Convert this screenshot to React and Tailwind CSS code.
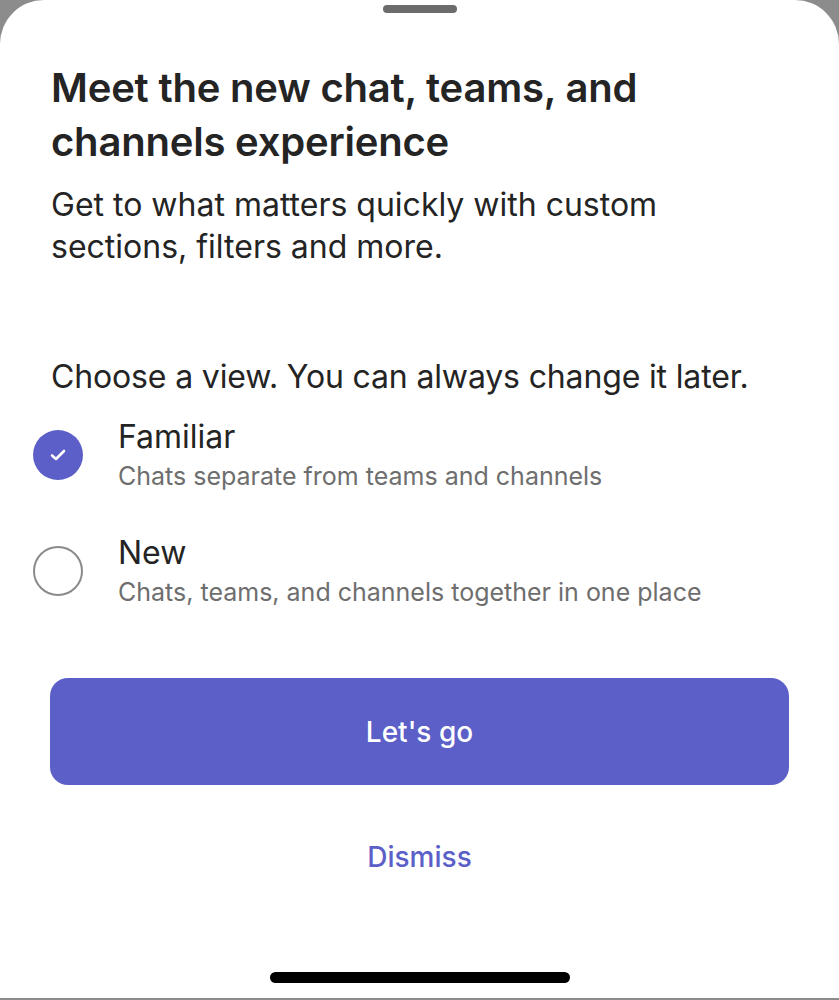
export default function App() {
  const font = { fontFamily: 'Inter, "Noto Sans", sans-serif' };
  return (
    <div className="w-[839px] h-[1000px] bg-[#8c8c8c] overflow-hidden" style={font}>
      <div className="relative w-full h-[998px] bg-white rounded-t-[44px] flex flex-col">
        <div className="flex justify-center pt-[5px]">
          <div className="w-[74px] h-[8px] rounded-full bg-[#6b6b6b]" />
        </div>
        <div className="px-[51px] mt-[48px]">
          <h1 className="text-[40px] leading-[54px] font-semibold text-[#242424] tracking-[-0.2px]">
            Meet the new chat, teams, and<br />channels experience
          </h1>
          <p className="mt-[15px] text-[32px] leading-[42px] text-[#242424]">
            Get to what matters quickly with custom<br />sections, filters and more.
          </p>
          <p className="mt-[88px] text-[32px] leading-[42px] text-[#242424] tracking-[-0.15px]">
            Choose a view. You can always change it later.
          </p>
        </div>
        <div className="flex flex-col mt-[18px]">
          <div className="flex items-center">
            <div className="w-[118px] shrink-0 pl-[33px]">
              <div className="w-[50px] h-[50px] rounded-full bg-[#5b5fc7] flex items-center justify-center">
                <svg width="16" height="12" viewBox="0 0 16 12" fill="none">
                  <path d="M2 6.5 L6 10 L14 2" stroke="white" strokeWidth="2.6" strokeLinecap="round" strokeLinejoin="round" />
                </svg>
              </div>
            </div>
            <div className="flex flex-col">
              <span className="text-[32px] leading-[42px] text-[#242424]">Familiar</span>
              <span className="text-[25px] leading-[36px] text-[#6e6e6e]">Chats separate from teams and channels</span>
            </div>
          </div>
          <div className="flex items-center mt-[38px]">
            <div className="w-[118px] shrink-0 pl-[33px]">
              <div className="w-[50px] h-[50px] rounded-full border-2 border-[#8a8a8a]" />
            </div>
            <div className="flex flex-col">
              <span className="text-[32px] leading-[42px] text-[#242424]">New</span>
              <span className="text-[25px] leading-[36px] text-[#6e6e6e]">Chats, teams, and channels together in one place</span>
            </div>
          </div>
        </div>
        <div className="px-[50px] mt-[68px]">
          <button className="w-full h-[107px] rounded-[18px] bg-[#5b5fc7] text-white text-[28px] font-medium">
            Let's go
          </button>
        </div>
        <div className="flex justify-center mt-[54px]">
          <span className="text-[28px] leading-[36px] font-medium text-[#5b5fc7]">Dismiss</span>
        </div>
        <div className="flex-1" />
        <div className="flex justify-center pb-[15px]">
          <div className="w-[300px] h-[11px] rounded-full bg-black" />
        </div>
      </div>
    </div>
  );
}
